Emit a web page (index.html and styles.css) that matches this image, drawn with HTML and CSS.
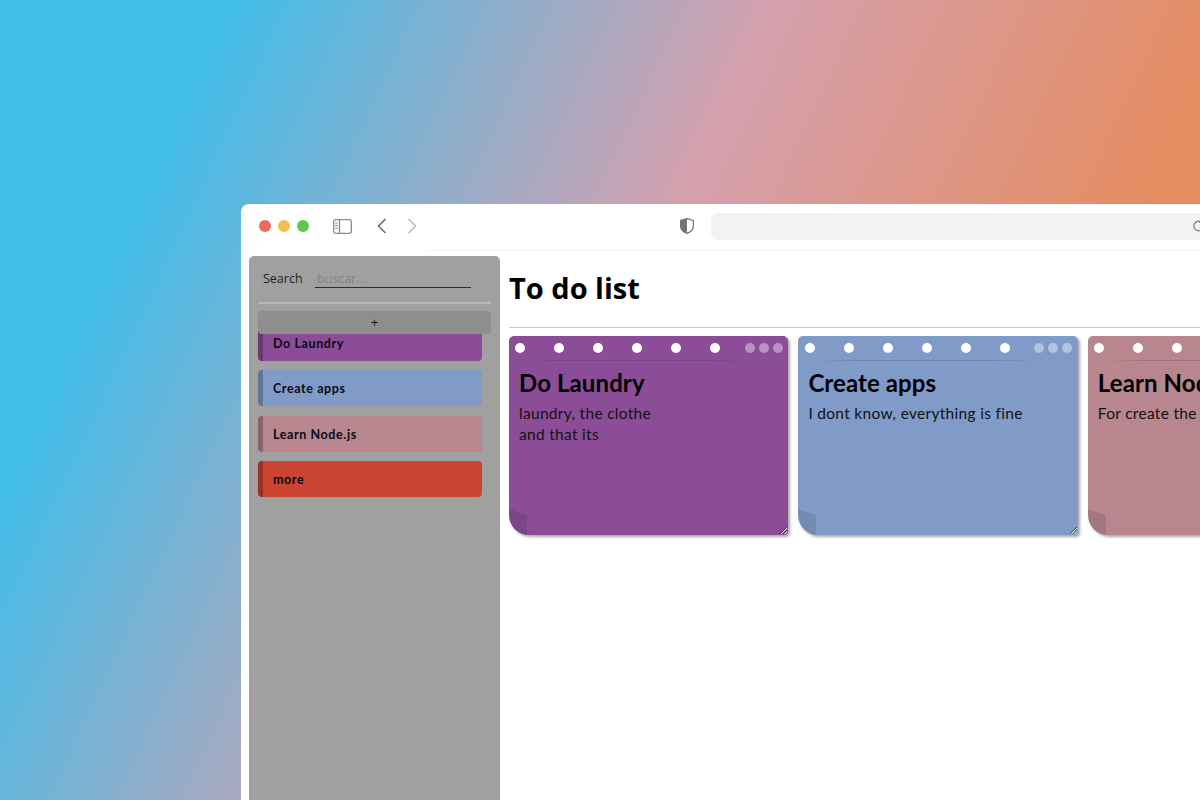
FILE: index.html
```html
<!DOCTYPE html>
<html lang="en">
<head>
<meta charset="utf-8">
<title>To do list</title>
<link rel="stylesheet" href="styles.css">
</head>
<body>
<div class="window">
  <header class="toolbar">
    <span class="dot red"></span><span class="dot yellow"></span><span class="dot green"></span>
    <svg class="ic-side" width="19" height="15" viewBox="0 0 19 15" fill="none" stroke="#8a8a8a" stroke-width="1.3"><rect x=".7" y=".7" width="17.600" height="13.600" rx="2"/><path d="M6.500 .7v13.600"/><path d="M2.200 4h2.800M2.200 6.500h2.800M2.200 9h2.800" stroke-width="1"/></svg>
    <svg class="ic-back" width="10" height="16" viewBox="0 0 10 16" fill="none" stroke="#6e6e6e" stroke-width="1.600"><path d="M8.500 1 1.500 8l7 7"/></svg>
    <svg class="ic-fwd" width="10" height="16" viewBox="0 0 10 16" fill="none" stroke="#bdbdbd" stroke-width="1.600"><path d="M1.500 1l7 7-7 7"/></svg>
    <svg class="ic-shield" width="14" height="16" viewBox="0 0 14 16"><path d="M7 .6 13.400 2.500V8c0 3.500-2.700 6-6.400 7.400C3.300 14 .6 11.500.6 8V2.500Z" fill="#fff" stroke="#757575" stroke-width="1.200"/><path d="M7 .6V15.400C3.300 14 .6 11.500.6 8V2.500Z" fill="#757575"/></svg>
    <div class="url"><svg class="ic-reload" width="14" height="14" viewBox="0 0 14 14" fill="none" stroke="#777" stroke-width="1.200"><path d="M11.500 7a4.800 4.800 0 1 1-2-3.900"/><path d="M9.800 .9v2.600H7.200"/></svg></div>
  </header>
  <div class="rule"></div>
  <div class="content">
    <aside class="sidebar">
      <div class="search"><label>Search</label><span class="input">buscar...</span></div>
      <div class="side-rule"></div>
      <button class="add">+</button>
      <ul class="list">
        <li class="item purple">Do Laundry</li>
        <li class="item blue">Create apps</li>
        <li class="item rose">Learn Node.js</li>
        <li class="item tomato">more</li>
      </ul>
    </aside>
    <main class="main">
      <h1>To do list</h1>
      <div class="main-rule"></div>
      <div class="cards">
        <article class="card purple">
          <div class="holes"><i></i><i></i><i></i><i></i><i></i><i></i></div>
          <div class="opts"><i></i><i></i><i></i></div>
          <div class="card-line"></div>
          <h2>Do Laundry</h2>
          <p>laundry, the clothe<br>and that its</p>
          <span class="fold"></span>
          <svg class="grip" width="9" height="9" viewBox="0 0 9 9" fill="none" stroke-width="1"><path d="M1 8 8 1M4.500 8 8 4.500" stroke="#333"/><path d="M2 8 8 2M5.500 8 8 5.500" stroke="#fff"/></svg>
        </article>
        <article class="card blue">
          <div class="holes"><i></i><i></i><i></i><i></i><i></i><i></i></div>
          <div class="opts"><i></i><i></i><i></i></div>
          <div class="card-line"></div>
          <h2>Create apps</h2>
          <p>I dont know, everything is fine</p>
          <span class="fold"></span>
          <svg class="grip" width="9" height="9" viewBox="0 0 9 9" fill="none" stroke-width="1"><path d="M1 8 8 1M4.500 8 8 4.500" stroke="#333"/><path d="M2 8 8 2M5.500 8 8 5.500" stroke="#fff"/></svg>
        </article>
        <article class="card rose">
          <div class="holes"><i></i><i></i><i></i><i></i><i></i><i></i></div>
          <div class="opts"><i></i><i></i><i></i></div>
          <div class="card-line"></div>
          <h2>Learn Node.js</h2>
          <p>For create the server</p>
          <span class="fold"></span>
        </article>
      </div>
    </main>
  </div>
</div>
</body>
</html>
```
FILE: styles.css
```css
* { box-sizing: border-box; }
html, body { margin: 0; height: 800px; overflow: hidden; }
body {
  padding: 204px 0 0 241px;
  background: linear-gradient(115deg, #41bdea 14.600%, #d5a0ae 49.200%, #e58c60 79.400%);
  font-family: "Open Sans", sans-serif;
}
.window {
  width: 975px;
  height: 596px;
  overflow: hidden;
  background: #fff;
  border-radius: 8px 8px 0 0;
}
.toolbar {
  height: 46px;
  display: flex;
  align-items: center;
  padding: 0 0 2px 18px;
}
.toolbar > * { flex: none; }
.dot { width: 12px; height: 12px; border-radius: 50%; margin-right: 7px; }
.red { background: #ec6a5e; }
.yellow { background: #f4bf4f; }
.green { background: #61c554; }
.ic-side { margin-left: 17px; }
.ic-back { margin-left: 25px; }
.ic-fwd { margin-left: 20px; }
.ic-shield { margin-left: 263px; }
.url {
  margin-left: 17px;
  width: 500px;
  height: 27px;
  background: #f2f2f2;
  border-radius: 6px;
  display: flex;
  align-items: center;
}
.ic-reload { margin-left: 481px; flex: none; }
.rule { height: 1px; margin-left: 187px; background: #f1f1f1; }
.content { display: flex; padding: 5px 0 0 8px; }
.sidebar {
  width: 251px;
  height: 560px;
  flex: none;
  background: #a0a0a0;
  border-radius: 5px 5px 0 0;
  padding: 9px 9px 0;
}
.search { display: flex; align-items: flex-start; height: 30px; padding-left: 5px; font-size: 12.500px; color: #1f1f1f; }
.search label { width: 52px; line-height: 27px; }
.input {
  width: 156px;
  height: 22.500px;
  border-bottom: 1px solid #2c2c2c;
  color: #848484;
  font-size: 12.500px;
  line-height: 27px;
  padding-left: 2px;
}
.side-rule { height: 2px; margin: 7px 0 7px 1px; background: #b9b9b9; }
.add {
  display: block;
  position: relative;
  z-index: 1;
  width: 233px;
  height: 23px;
  padding: 0;
  border: 0;
  border-radius: 4px;
  background: #8e8e8e;
  color: #111;
  font: 13px/23px "Open Sans", sans-serif;
}
.list { list-style: none; margin: -9px 0 0; padding: 0; width: 224px; }
.item {
  height: 36px;
  margin-bottom: 9.400px;
  padding: 2px 0 0 10px;
  border-left: 5px solid rgba(0, 0, 0, .25);
  border-radius: 4px;
  font: 700 12.500px/34px Lato, sans-serif;
  letter-spacing: .6px;
  color: #0a0a14;
}
.purple { background: #8b4d98; }
.blue { background: #819bc9; }
.rose { background: #b7868f; }
.tomato { background: #cb4431; }
.main { flex: none; width: 700px; padding: 0 0 0 9px; }
h1 { margin: 0; height: 71px; font: 700 29px/64px "Open Sans", sans-serif; color: #000; }
.main-rule { height: 1px; background: #c9c9c9; }
.cards { display: flex; gap: 10px; margin-top: 8px; }
.card {
  position: relative;
  width: 279.400px;
  height: 199px;
  flex: none;
  border-radius: 5px 5px 4px 20px;
  box-shadow: 2px 2px 3px rgba(0, 0, 0, .35);
  padding: 0 0 0 10px;
  overflow: hidden;
}
.holes { position: absolute; left: 6.300px; top: 7px; display: flex; gap: 29px; }
.holes i { width: 10px; height: 10px; border-radius: 50%; background: #fff; }
.opts { position: absolute; right: 5.500px; top: 7px; display: flex; gap: 4px; }
.opts i { width: 10px; height: 10px; border-radius: 50%; background: rgba(255, 255, 255, .4); }
.card-line {
  position: absolute;
  left: 20px;
  top: 24px;
  width: 220px;
  height: 1px;
  background: linear-gradient(90deg, transparent, rgba(0, 0, 0, .14) 15%, rgba(0, 0, 0, .14) 80%, transparent);
}
h2 { margin: 0; padding-top: 33px; font: 700 24px/28px Lato, sans-serif; letter-spacing: .1px; color: #000; }
p { margin: 6px 0 0; font: 400 15.500px/21px Lato, sans-serif; letter-spacing: .3px; color: #111; }
.fold {
  position: absolute;
  left: 0;
  bottom: 0;
  width: 18px;
  height: 26px;
  background: rgba(0, 0, 0, .1);
  clip-path: polygon(0 0, 100% 24%, 100% 100%, 0 100%);
}
.grip { position: absolute; right: 0; bottom: 0; }
```
